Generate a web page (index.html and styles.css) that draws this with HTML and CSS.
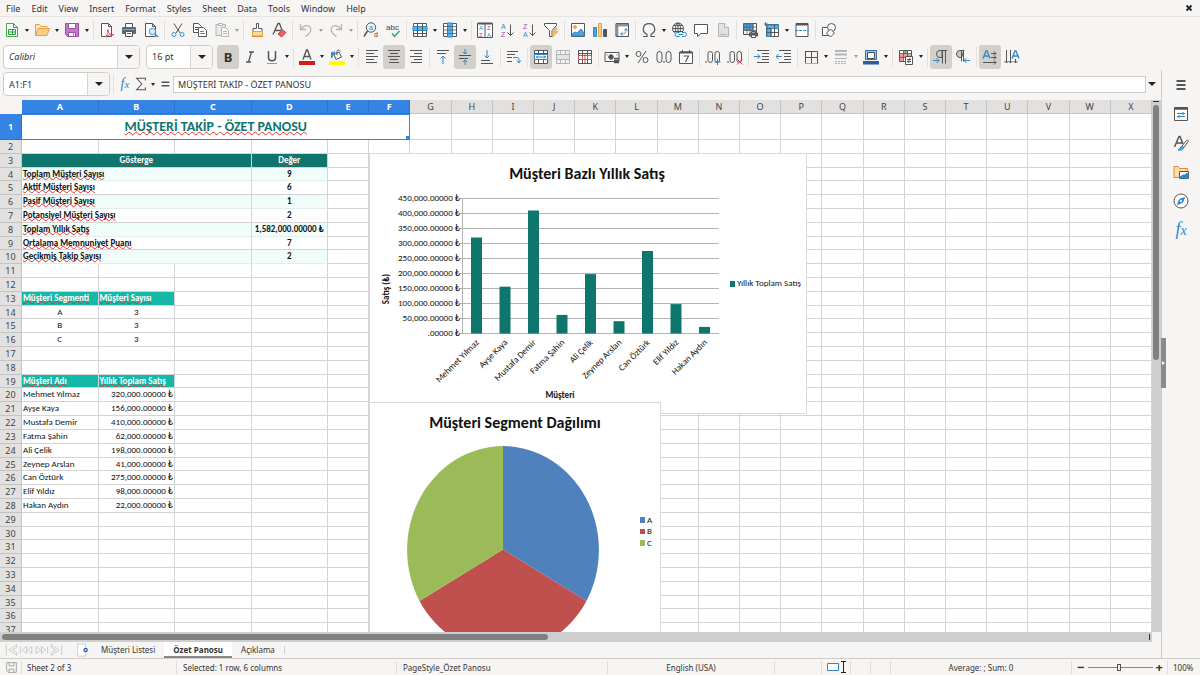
FILE: index.html
```html
<!DOCTYPE html>
<html lang="tr">
<head>
<meta charset="utf-8">
<title>Özet Panosu</title>
<link rel="stylesheet" href="styles.css">
</head>
<body>
<div class="app">
  <header class="menubar">
    <nav class="menus">
      <button>File</button><button>Edit</button><button>View</button><button>Insert</button><button>Format</button><button>Styles</button><button>Sheet</button><button>Data</button><button>Tools</button><button>Window</button><button>Help</button>
    </nav>
    <button class="close" aria-label="Close"><svg viewBox="0 0 8 8"><path d="M1.500 1.500l5 5M6.500 1.500l-5 5" stroke="#222" stroke-width="1.800"/></svg></button>
  </header>

  <div class="toolbar standard">
    <button class="tool" aria-label="New"><svg viewBox="0 0 16 16"><path d="M2.500 1.500h7l4 4v9h-11z" fill="#fff" stroke="#3fae49"/><path d="M9.500 1.500v4h4M4.500 7.500h7v5h-7zM4.500 10h7M8.500 7.500v5" stroke="#2f9e44"/></svg></button><button class="drop" aria-label="New options"></button>
    <button class="tool" aria-label="Open"><svg viewBox="0 0 16 16"><path d="M1.500 13.500v-11h4l1.500 2h6v2" fill="#fdebc8" stroke="#e8a33d"/><path d="M1.500 13.500l2.500-7h11.500l-2.500 7z" fill="#f8cf87" stroke="#e8a33d"/></svg></button><button class="drop" aria-label="Open options"></button>
    <button class="tool" aria-label="Save"><svg viewBox="0 0 16 16"><path d="M1.500 1.500h13v13h-11l-2-2z" fill="#c774cf" stroke="#9b4fa5"/><path d="M4.500 1.500h7v5h-7zM4.500 10.500h7v4h-7z" fill="#fff" stroke="#9b4fa5"/><path d="M9.500 11.500v2" stroke="#9b4fa5"/></svg></button><button class="drop" aria-label="Save options"></button>
    <i class="sep"></i>
    <button class="tool" aria-label="Export as PDF"><svg viewBox="0 0 16 16"><path d="M2.500 1.500h7l3 3v10h-10z" fill="#fff"/><path d="M9.500 1.500v3h3"/><path d="M6 15c2-2 3.500-5 3.500-6.500s-1.500-1-1 0.500c.8 2 3 4 6.500 4-3-1-6 0-9 2z" stroke="#e0475b"/></svg></button>
    <button class="tool" aria-label="Print"><svg viewBox="0 0 16 16"><path d="M4.500 5v-3.500h7V5" fill="#fff"/><rect x="1" y="5" width="14" height="7" rx="1" fill="#5c6a75" stroke="none"/><path d="M2 7.500h12" stroke="#58b0e6"/><path d="M4.500 9.500h7v5h-7z" fill="#fff"/><path d="M6 11.500h4"/></svg></button>
    <button class="tool" aria-label="Print Preview"><svg viewBox="0 0 16 16"><path d="M2.500 1.500h7l3 3v10h-10z" fill="#fff"/><path d="M9.500 1.500v3h3"/><circle cx="9.500" cy="9.500" r="3.200" fill="#d6ecfa" stroke="#3a93d3"/><path d="M12 12l3 3" stroke="#3a93d3" stroke-width="1.500"/></svg></button>
    <i class="sep"></i>
    <button class="tool" aria-label="Cut"><svg viewBox="0 0 16 16"><path d="M4 1.500l6 9.500M12 1.500L6 11"/><circle cx="4" cy="12.500" r="2" stroke="#3a93d3"/><circle cx="12" cy="12.500" r="2" stroke="#3a93d3"/></svg></button>
    <button class="tool" aria-label="Copy"><svg viewBox="0 0 16 16"><path d="M1.500 1.500h5l3 3v6h-8z" fill="#fff"/><path d="M6.500 5.500h5l3 3v6h-8z" fill="#fff"/><path d="M3 5.500h3M3 7.500h3"/><path d="M8 9.500h4M8 11.500h5" stroke="#3a93d3"/></svg></button>
    <button class="tool faded" aria-label="Paste" disabled><svg viewBox="0 0 16 16"><path d="M2 2.500h9.500v11H2z" fill="#d8d8d8"/><path d="M4.500 1.500h4v2h-4z" fill="#fff"/><path d="M7.500 5.500h4l3 3v6h-7z" fill="#fff"/><path d="M9 9.500h4M9 11.500h4"/></svg></button><button class="drop faded" aria-label="Paste options" disabled></button>
    <i class="sep"></i>
    <button class="tool" aria-label="Clone Formatting"><svg viewBox="0 0 16 16"><path d="M7.500 1.500h2v5h3.500v3H4v-3h3.500z" fill="#fff"/><path d="M3.500 9.500h10v4.500h-10z" fill="#f9d9a4" stroke="#e8a33d"/><path d="M3 14.500h11" stroke="#e0862d"/></svg></button>
    <button class="tool" aria-label="Clear Formatting"><svg viewBox="0 0 16 16"><path d="M2 12.500L7 1.500h1.500l3 8M4 8.500h6" stroke-width="1.300"/><path d="M7 12l4.500-4 3.500 2.500-4.500 4.500z" fill="#ef5b67" stroke="#d23c4a"/></svg></button>
    <i class="sep"></i>
    <button class="tool faded" aria-label="Undo" disabled><svg viewBox="0 0 16 16"><path d="M2.500 2v5.500H8M3 7c3-4 8-4.500 9.500-1s-1 6-5 8.500" stroke-width="1.300"/></svg></button><button class="drop faded" aria-label="Undo options" disabled></button>
    <button class="tool faded" aria-label="Redo" disabled><svg viewBox="0 0 16 16"><path d="M13.500 2v5.500H8M13 7C10 3 5 2.500 3.500 6s1 6 5 8.500" stroke-width="1.300"/></svg></button><button class="drop faded" aria-label="Redo options" disabled></button>
    <i class="sep"></i>
    <button class="tool" aria-label="Find and Replace"><svg viewBox="0 0 16 16"><circle cx="8" cy="5.500" r="4.700" fill="#e8f4fc"/><path d="M4.500 9L1 14.500" stroke-width="1.500"/><text x="6" y="8" font-size="7" class="blue">a</text><text x="11" y="15" font-size="7">d</text></svg></button>
    <button class="tool" aria-label="Spelling"><svg viewBox="0 0 16 16"><text x="1" y="8" font-size="8">abc</text><path d="M7 11.500l2.500 3 5-5.500" stroke="#35a56b" stroke-width="1.400"/></svg></button>
    <i class="sep"></i>
    <button class="tool" aria-label="Row"><svg viewBox="0 0 16 16"><path d="M1.500 1.500h13v13h-13z" fill="#fff"/><path d="M1 4.500h14v4H1z" fill="#5ab2ea" stroke="#2f87c8"/><path d="M1.500 11.500h13M5.500 1.500v13M10.500 1.500v13"/></svg></button><button class="drop" aria-label="Row options"></button>
    <button class="tool" aria-label="Column"><svg viewBox="0 0 16 16"><path d="M1.500 1.500h13v13h-13z" fill="#fff"/><path d="M5.500 1h5v14h-5z" fill="#5ab2ea" stroke="#2f87c8"/><path d="M1.500 4.500h13M1.500 8h13M1.500 11.500h13" stroke-width=".8"/></svg></button><button class="drop" aria-label="Column options"></button>
    <i class="sep"></i>
    <button class="tool" aria-label="Sort"><svg viewBox="0 0 16 16"><path d="M.5 1.500h15v14H.5zM8 2v13" fill="#fff"/><path d="M.5 1.500h15" stroke-width="2"/><text x="2" y="8" font-size="6" class="blue">A</text><text x="2" y="15" font-size="6" class="violet">Z</text><text x="10" y="8" font-size="6" class="violet">Z</text><text x="10" y="15" font-size="6" class="blue">A</text></svg></button>
    <button class="tool" aria-label="Sort Ascending"><svg viewBox="0 0 16 16"><text x="2" y="7" font-size="7" class="blue">A</text><text x="2" y="15" font-size="7" class="violet">Z</text><path d="M11.500 2.500v11M8.500 10.500l3 3 3-3"/></svg></button>
    <button class="tool" aria-label="Sort Descending"><svg viewBox="0 0 16 16"><text x="2" y="7" font-size="7" class="violet">Z</text><text x="2" y="15" font-size="7" class="blue">A</text><path d="M11.500 2.500v11M8.500 10.500l3 3 3-3"/></svg></button>
    <button class="tool" aria-label="AutoFilter"><svg viewBox="0 0 16 16"><path d="M1.500 1.500h12v2L9 8.500v6H6.500v-6l-5-5z" fill="#fff"/><path d="M12.500 6L9 11h2.500l-2 4.500L15 9.500h-2.500L14 6z" fill="#f8b85a" stroke="#e8a33d" stroke-width=".5"/></svg></button>
    <i class="sep"></i>
    <button class="tool" aria-label="Insert Image"><svg viewBox="0 0 16 16"><path d="M1.500 1.500h13v13h-13z" fill="#fff"/><path d="M2 12l3-2 2 1 4-4 3 4v3H2z" fill="#4ea6e0" stroke="#2f87c8"/><circle cx="5" cy="5" r="1.500" fill="#f8b85a" stroke="#e8a33d"/></svg></button>
    <button class="tool" aria-label="Insert Chart"><svg viewBox="0 0 16 16"><path d="M1.500 5.500h3v9h-3z" fill="#4ea6e0" stroke="#2f87c8"/><path d="M6.500 1.500h3v13h-3z" fill="#fbd08a" stroke="#e8a33d"/><path d="M11.500 7.500h3v7h-3z" fill="#555"/></svg></button>
    <button class="tool" aria-label="Pivot Table"><svg viewBox="0 0 16 16"><path d="M2 1.500h12.500v13H2z" fill="#fff"/><path d="M2 2h12v2H2zM2 4h2v10H2z" fill="#9b9b9b" stroke="#777" stroke-width=".6"/><path d="M7 12c4 0 5-1 5-5M10.500 8.500L12 6.500l1.500 2M8.500 10.500l-2 1.500 2 1.500" stroke="#2f87c8"/></svg></button>
    <i class="sep"></i>
    <button class="tool" aria-label="Special Character"><svg viewBox="0 0 16 16"><path d="M2 14.500h4v-2C3 11 2 9 2.300 6.500 2.800 3.500 5 1.700 8 1.700s5.200 1.800 5.700 4.800C14 9 13 11 10 12.500v2h4" stroke-width="1.200"/></svg></button><button class="drop" aria-label="Special Character options"></button>
    <button class="tool" aria-label="Hyperlink"><svg viewBox="0 0 16 16"><circle cx="7" cy="6.500" r="5.500"/><path d="M1.500 6.500h11M7 1v11M2.500 3.500h9M2.500 9.500h9"/><ellipse cx="7" cy="6.500" rx="2.500" ry="5.500"/><path d="M4 10h12v5H4z" fill="#f6f5f4" stroke="none"/><path d="M8.500 14.500H6a2 2 0 010-4h2.500M11 10.500h2.500a2 2 0 010 4H11M7.500 12.500h4.500" stroke="#2f87c8"/></svg></button>
    <button class="tool" aria-label="Comment"><svg viewBox="0 0 16 16"><path d="M1.500 2.500h13v9H8L4.500 14.500v-3h-3z" fill="#fff"/></svg></button>
    <button class="tool faded" aria-label="Headers and Footers" disabled><svg viewBox="0 0 16 16"><path d="M3.500 1.500h6l4 4v9h-10z" fill="#c5c5c5"/><path d="M9.500 1.500v4h4" fill="#fff"/><path d="M5 12.500h7"/></svg></button>
    <i class="sep"></i>
    <button class="tool" aria-label="Print Area"><svg viewBox="0 0 16 16"><path d="M1.500 1.500h13v11h-13z" fill="#fff"/><path d="M2 2h9v6H2z" fill="#4ea6e0" stroke="#2f87c8"/><path d="M1.500 5h13M1.500 8.500h13M5 2v10M8 2v10M11 2v10" stroke-width=".7"/><path d="M7.500 11h8v3h-8z" fill="#5c6a75"/><path d="M9.500 13h4v2.500h-4zM9.500 9.500h4V11h-4z" fill="#fff"/></svg></button>
    <button class="tool" aria-label="Freeze"><svg viewBox="0 0 16 16"><path d="M2.500 2.500h12v12h-12z" fill="#fff"/><path d="M3 3h11.500v3.500H7v8H3z" fill="#5ab2ea" stroke="#2f87c8"/><path d="M3 10.500h11.500M10.500 3v11.500M3 6.500h4M7 7v8"/><path d="M1.500 0v4M0 2h4" stroke="#2f87c8"/></svg></button><button class="drop" aria-label="Freeze options"></button>
    <button class="tool" aria-label="Split Window"><svg viewBox="0 0 16 16"><path d="M2 1.500h12v13H2z" fill="#fff"/><path d="M2 2.500h12" stroke-width="2"/><path d="M1 8.500h14" stroke="#2f87c8" stroke-dasharray="3 1"/></svg></button>
    <i class="sep"></i>
    <button class="tool" aria-label="Draw Functions"><svg viewBox="0 0 16 16"><path d="M1.500 5.500h8v8h-8z" fill="#fff"/><circle cx="10.500" cy="5.500" r="4" fill="#fff"/><path d="M9.500 7l4 4-4 4-4-4z" fill="#fff"/></svg></button>
  </div>

  <div class="toolbar formatting">
    <div class="combo font-name"><input aria-label="Font Name" value="Calibri"><button class="open" aria-label="Font list"></button></div>
    <div class="combo font-size"><input aria-label="Font Size" value="16 pt"><button class="open" aria-label="Size list"></button></div>
    <button class="tool on" aria-label="Bold"><span class="bold">B</span></button>
    <button class="tool" aria-label="Italic"><svg viewBox="0 0 16 16"><path d="M7 3h5M4 13h5M9.500 3l-3 10" stroke-width="1.300"/></svg></button>
    <button class="tool" aria-label="Underline"><svg viewBox="0 0 16 16"><path d="M4.500 2v6.500c0 4.300 7 4.300 7 0V2" stroke-width="1.500"/><path d="M3 14.500h10" stroke="#5aa9e0"/></svg></button><button class="drop" aria-label="Underline options"></button>
    <i class="sep"></i>
    <button class="tool" aria-label="Font Color"><svg viewBox="0 0 16 16"><path d="M4 10.500L7.500 1h1L12 10.500M5.500 7.500h5" stroke-width="1.400"/><path d="M0 12h16v4H0z" fill="#c9211e" stroke="none"/></svg></button><button class="drop" aria-label="Font Color options"></button>
    <button class="tool" aria-label="Highlighting"><svg viewBox="0 0 16 16"><path d="M5 5.500l5-2.500 2.500 5L7 10.500zM8 6V2.500c0-2 3-2 3 0" fill="#fff"/><path d="M2.500 9V3.500L6 3 3.500 7z" fill="#3a93d3" stroke="#2f87c8"/><path d="M0 12h16v4H0z" fill="#ff0" stroke="none"/></svg></button><button class="drop" aria-label="Highlighting options"></button>
    <i class="sep"></i>
    <button class="tool" aria-label="Align Left"><svg viewBox="0 0 16 16"><path d="M2 1.500h12M2 4.500h8M2 7.500h12M2 10.500h8M2 13.500h11"/></svg></button>
    <button class="tool on" aria-label="Center"><svg viewBox="0 0 16 16"><path d="M2 1.500h12M4 4.500h8M2 7.500h12M4 10.500h8M3 13.500h10"/></svg></button>
    <button class="tool" aria-label="Align Right"><svg viewBox="0 0 16 16"><path d="M2 1.500h12M6 4.500h8M2 7.500h12M6 10.500h8M3 13.500h11"/></svg></button>
    <i class="sep"></i>
    <button class="tool" aria-label="Align Top"><svg viewBox="0 0 16 16"><path d="M2 1.500h12M2 4.500h9"/><path d="M8 15V7M5.500 9.500L8 7l2.500 2.500" stroke="#2f87c8"/></svg></button>
    <button class="tool on" aria-label="Center Vertically"><svg viewBox="0 0 16 16"><path d="M2 6.500h12M2 9.500h9"/><path d="M8 0v5M6 3l2 2 2-2M8 16v-5M6 13l2-2 2 2" stroke="#2f87c8"/></svg></button>
    <button class="tool" aria-label="Align Bottom"><svg viewBox="0 0 16 16"><path d="M2 14.500h12M2 11.500h9"/><path d="M8 1v8M5.500 6.500L8 9l2.500-2.500" stroke="#2f87c8"/></svg></button>
    <i class="sep"></i>
    <button class="tool" aria-label="Wrap Text"><svg viewBox="0 0 16 16"><path d="M1 2.500h11M1 5.500h8M1 8.500h5M1 12.500h5"/><path d="M7 8.500h4c2 0 2 1 2 5M11 11.500l2 2.500 2-2.500" stroke="#2f87c8"/></svg></button>
    <i class="sep"></i>
    <button class="tool on" aria-label="Merge and Center"><svg viewBox="0 0 16 16"><path d="M1.500 1.500h13v13h-13zM1.500 4.500h13M5.500 1.500v13M10.500 1.500v13" fill="#fff"/><path d="M1.500 5.500h13v5h-13z" fill="#fff" stroke="#2f87c8"/><path d="M3 8h10M5 6.500L3.500 8 5 9.500M11 6.500L12.500 8 11 9.500" stroke="#2f87c8"/></svg></button>
    <button class="tool faded" aria-label="Merge Cells" disabled><svg viewBox="0 0 16 16"><path d="M1.500 1.500h13v13h-13zM1.500 5.500h13M5.500 1.500v13M10.500 1.500v13" fill="#eee"/><path d="M1.500 5.500h13v5h-13z" fill="#ccc"/></svg></button>
    <button class="tool" aria-label="Unmerge Cells"><svg viewBox="0 0 16 16"><path d="M1.500 1.500h13v13h-13zM1.500 4.500h13M5.500 1.500v13M10.500 1.500v13" fill="#fff"/><path d="M1.500 6.500h13v4h-13zM5.500 6.500v4M10.500 6.500v4M8 4v10" fill="#fff" stroke="#dc4b4b"/></svg></button>
    <i class="sep"></i>
    <button class="tool" aria-label="Currency"><svg viewBox="0 0 16 16"><path d="M1 3.500h14v9H1z" fill="#fff"/><circle cx="7" cy="8" r="2.300" fill="#555"/><path d="M10 9.500h5M10 11.500h5M10 13.500h5" stroke-width="1.500"/><path d="M3 5.500v1M13 5.500v1"/></svg></button><button class="drop" aria-label="Currency options"></button>
    <button class="tool" aria-label="Percent"><svg viewBox="0 0 16 16"><circle cx="4.500" cy="5" r="2.500"/><circle cx="11.500" cy="11" r="2.500"/><path d="M12 2L4 14"/></svg></button>
    <button class="tool" aria-label="Number"><svg viewBox="0 0 16 16"><rect x="1" y="2.500" width="5" height="11" rx="2.500"/><rect x="10" y="2.500" width="5" height="11" rx="2.500"/><path d="M8 12v2"/></svg></button>
    <button class="tool" aria-label="Date"><svg viewBox="0 0 16 16"><path d="M1.500 3h13v11.500h-13zM4.500 1v3M11.500 1v3" fill="#fff"/><path d="M2 3.500h12" stroke-width="2"/><path d="M5.500 7h5L7.500 13" stroke-width="1.200"/></svg></button>
    <i class="sep"></i>
    <button class="tool" aria-label="Add Decimal"><svg viewBox="0 0 16 16"><path d="M1 12v2"/><rect x="3" y="2.500" width="4.500" height="11" rx="2.200"/><rect x="10" y="2.500" width="4.500" height="11" rx="2.200"/><path d="M12.500 10v6M9.500 13h6" stroke="#2f87c8"/></svg></button>
    <button class="tool" aria-label="Delete Decimal"><svg viewBox="0 0 16 16"><path d="M1 12v2"/><rect x="3" y="2.500" width="4.500" height="11" rx="2.200"/><rect x="10" y="2.500" width="4.500" height="11" rx="2.200"/><path d="M10 10l5.500 5.500M15.500 10L10 15.500" stroke="#e0475b"/></svg></button>
    <i class="sep"></i>
    <button class="tool" aria-label="Increase Indent"><svg viewBox="0 0 16 16"><path d="M3 1.500h12M8 4.500h7M8 7.500h7M8 10.500h7M3 13.500h12"/><path d="M0 7.500h6M3.500 5L6 7.500 3.500 10" stroke="#2f87c8"/></svg></button>
    <button class="tool" aria-label="Decrease Indent"><svg viewBox="0 0 16 16"><path d="M3 1.500h12M8 4.500h7M8 7.500h7M8 10.500h7M3 13.500h12"/><path d="M0 7.500h6M2.500 5L0 7.500 2.500 10" stroke="#2f87c8"/></svg></button>
    <i class="sep"></i>
    <button class="tool" aria-label="Borders"><svg viewBox="0 0 16 16"><path d="M2 2.500h12.500v12M2.500 2v12.500M8.500 2v12M2 8.500h12"/><path d="M2 14.500h12" stroke="#e8a33d"/></svg></button><button class="drop" aria-label="Borders options"></button>
    <button class="tool faded" aria-label="Border Style" disabled><svg viewBox="0 0 16 16"><path d="M2 2h12M2 5.500h12" stroke-width="2"/><path d="M2 9.500h12"/><path d="M2 12.500h12M2 14.500h12" stroke-dasharray="2 1"/></svg></button><button class="drop faded" aria-label="Border Style options" disabled></button>
    <button class="tool" aria-label="Border Color"><svg viewBox="0 0 16 16"><path d="M2.500 1.500h11v9h-11z" fill="#9cc9ec" stroke="#2f6fab"/><path d="M4.500 3.500h7v6h-7z" fill="#fff" stroke="#4a4a4a"/><path d="M0 12h16v3.500H0z" fill="#2a6099" stroke="none"/></svg></button><button class="drop" aria-label="Border Color options"></button>
    <i class="sep"></i>
    <button class="tool" aria-label="Conditional"><svg viewBox="0 0 16 16"><path d="M1.500 1.500h12v11h-12z" fill="#fff"/><path d="M6 2h4v4H6z" fill="#5cc27c" stroke="none"/><path d="M2 5h11v3H2zM2 8h3v4H2z" fill="#f39a9a" stroke="none"/><path d="M1.500 4.500h12M1.500 8.500h12M5.500 1.500v11M9.500 1.500v11" stroke-width=".8"/><path d="M7.500 7.500h7v8h-7z" fill="#fff"/><path d="M9 10.500h4M9 12.500h4M12 9l-2 5"/></svg></button><button class="drop" aria-label="Conditional options"></button>
    <i class="sep"></i>
    <button class="tool on" aria-label="Left-To-Right"><svg viewBox="0 0 16 16"><path d="M14 1.500H7a3 3 0 000 7h2V1.500M9.500 1.500v13M12.500 1.500v13"/><path d="M0 11.500h6M3.500 9L6 11.500 3.500 14" stroke="#2f87c8"/></svg></button>
    <button class="tool" aria-label="Right-To-Left"><svg viewBox="0 0 16 16"><path d="M9 1.500H5a3 3 0 000 7h1.500zM6.500 1.500v11M8.500 1.500v11" fill="#ccc"/><path d="M9 11.500h6M11.500 9L9 11.500l2.500 2.500" stroke="#2f87c8"/></svg></button>
    <i class="sep"></i>
    <button class="tool on" aria-label="Horizontal text"><svg viewBox="0 0 16 16"><path d="M1 9.500L4 2h1l3 7.500M2 7h5" stroke="#2f87c8" stroke-width="1.300"/><path d="M9 4.500h5M9 8.500h5M12 2.500l2 2-2 2M12 6.500l2 2-2 2M1 13.500h13M12 11.500l2 2-2 2"/></svg></button>
    <button class="tool" aria-label="Vertical text"><svg viewBox="0 0 16 16"><path d="M8 9.500L11 2h1l3 7.500M9 7h5" stroke="#2f87c8" stroke-width="1.300"/><path d="M2.500 1v13M.5 12l2 2 2-2M6.500 1v13M4.500 12l2 2 2-2M11.500 10v4M9.500 12l2 2 2-2"/></svg></button>
  </div>

  <div class="body">
    <main class="work">
      <div class="formula-bar">
        <div class="combo name-box"><input aria-label="Name Box" value="A1:F1"><button class="open" aria-label="Names"></button></div>
        <i class="sep"></i>
        <button class="mini" aria-label="Function Wizard"><span class="fx">f<small>x</small></span></button>
        <button class="mini" aria-label="Select Function"><svg viewBox="0 0 16 16"><path d="M13 4V1.500H3L9 8l-6 6.500h10V12" stroke-width="1.200"/></svg></button>
        <button class="drop" aria-label="Function list"></button>
        <button class="mini" aria-label="Formula"><svg viewBox="0 0 16 16"><path d="M4 6h9M4 10h9" stroke-width="1.800"/></svg></button>
        <input class="formula" aria-label="Input line" value="MÜŞTERİ TAKİP - ÖZET PANOSU">
        <button class="open expand" aria-label="Expand Formula Bar"></button>
      </div>

      <div class="grid-area">
        <div class="viewport">
          <table class="sheet">
            <thead id="cols"></thead>
            <tbody id="rows"></tbody>
          </table>
          <svg class="chart bars" viewBox="1 1 436 259" id="bars" role="img" aria-label="Müşteri Bazlı Yıllık Satış"></svg>
          <svg class="chart pie" viewBox="1 1 290 268" role="img" aria-label="Müşteri Segment Dağılımı">
            <text class="title" x="146" y="26" text-anchor="middle">Müşteri Segment Dağılımı</text>
            <path fill="#4f81bd" d="M134 147.500V44A96.500 104 0 0 1 217.500 199z"/>
            <path fill="#c0504d" d="M134 147.500L217.500 199A96.500 104 0 0 1 50.500 199z"/>
            <path fill="#9bbb59" d="M134 147.500L50.500 199A96.500 104 0 0 1 134 44z"/>
            <rect x="271" y="115" width="5" height="6" fill="#4f81bd"/><text x="278" y="121">A</text>
            <rect x="271" y="127" width="5" height="5" fill="#c0504d"/><text x="278" y="132">B</text>
            <rect x="271" y="138" width="5" height="6" fill="#9bbb59"/><text x="278" y="144">C</text>
          </svg>
        </div>
        <div class="vscroll"><i class="thumb"></i></div>
      </div>
      <div class="hscroll"><i class="thumb"></i></div>

      <div class="tabs">
        <div class="tab-nav">
          <button aria-label="First sheet"><svg viewBox="0 0 16 16"><path d="M2 2v12M14 2L5 8l9 6v-3L9 8l5-3z"/></svg></button>
          <button aria-label="Previous sheet"><svg viewBox="0 0 16 16"><path d="M1 4v8M8 4L3 8l5 4zM14 4L9 8l5 4z"/></svg></button>
          <button aria-label="Next sheet"><svg viewBox="0 0 16 16"><path d="M15 4v8M8 4l5 4-5 4zM2 4l5 4-5 4z"/></svg></button>
          <button aria-label="Last sheet"><svg viewBox="0 0 16 16"><path d="M14 2v12M2 2l9 6-9 6v-3l5-3-5-3z"/></svg></button>
        </div>
        <button class="add" aria-label="Add sheet"><svg viewBox="0 0 12 16"><path d="M0 1h9v14H0z" fill="#fff" stroke="#ccc"/><circle cx="9" cy="8" r="1.800" stroke="#2a63b0" stroke-width="1.500"/></svg></button>
        <button class="tab">Müşteri Listesi</button>
        <button class="tab active">Özet Panosu</button>
        <button class="tab">Açıklama</button>
        <i class="sep"></i>
      </div>
    </main>

    <aside class="sidebar">
      <button class="grip" aria-label="Hide sidebar"></button>
      <button aria-label="Sidebar Settings"><svg viewBox="0 0 16 16"><path d="M3.500 4h9M3.500 8h9M3.500 12h9" stroke="#222" stroke-width="1.400"/></svg></button>
      <button aria-label="Properties"><svg viewBox="0 0 16 16"><path d="M1.500 1.500h13v13h-13z" fill="#fff"/><path d="M1.500 2.500h13" stroke-width="2.500"/><path d="M4 7.500h8M10 6v3M4 10.500h8M6 9v3" stroke="#2f87c8"/></svg></button>
      <button aria-label="Styles"><svg viewBox="0 0 16 16"><path d="M1.500 12L6 1.500h1L10 9M3 8h6" stroke-width="1.500"/><path d="M9 11l4.500-5.500c1-1 2 0 1.500 1L11 12.500" fill="#fff"/><path d="M5 15c2 0 2-3 4-4l2 1.500C10 15 7 15.500 5 15z" fill="#5aa9e0" stroke="#2f87c8"/></svg></button>
      <button aria-label="Gallery"><svg viewBox="0 0 16 16"><path d="M1 13.500v-11h4l1.500 2h8v9z" fill="#fbdcae" stroke="#e8862d"/><path d="M6.500 7.500h9v7h-9z" fill="#fff"/><path d="M7 13l3-2 2 0 2-2 1 2v3H7z" fill="#2f87c8" stroke="#2f87c8"/></svg></button>
      <button aria-label="Navigator"><svg viewBox="0 0 16 16"><circle cx="8" cy="8" r="7" fill="#fff"/><path d="M11.500 4.500L9.500 9.500l-5 2 2-5z" fill="#3a93d3" stroke="#2f87c8"/><circle cx="8" cy="8" r="1" fill="#fff" stroke="none"/></svg></button>
      <button aria-label="Functions"><span class="fx big">f<small>x</small></span></button>
    </aside>
  </div>

  <footer class="status">
    <span class="cell s-save"><svg viewBox="0 0 16 16"><path d="M2 2h12v12H4l-2-2zM5 2v4h6V2M5 14v-4h6v4" stroke="#999"/></svg></span>
    <span class="cell s-sheet">Sheet 2 of 3</span>
    <span class="cell s-sel">Selected: 1 row, 6 columns</span>
    <span class="cell s-style">PageStyle_Özet Panosu</span>
    <span class="cell s-lang">English (USA)</span>
    <span class="cell s-ins"></span>
    <span class="cell s-mode"><svg viewBox="0 0 22 14"><path d="M.5 3.500h11v7H.5z" fill="#fff" stroke="#2f87c8"/><path d="M14 1.500h5M14 12.500h5M16.500 1.500v11" stroke="#222"/></svg></span>
    <span class="cell s-gap"></span>
    <span class="cell s-gap"></span>
    <span class="cell s-sum">Average: ; Sum: 0</span>
    <span class="cell s-zoom"><button aria-label="Zoom out">−</button><input type="range" min="0" max="100" value="48" aria-label="Zoom"><button aria-label="Zoom in">+</button></span>
    <span class="cell s-pct">100%</span>
  </footer>
</div>
<script src="app.js"></script>
</body>
</html>
```
FILE: styles.css
```css
* { box-sizing: border-box; }
body { margin: 0; background: #f6f5f4; color: #333; font-family: "Noto Sans", sans-serif; font-size: 9px; }
button, input { margin: 0; padding: 0; border: 0; background: none; color: inherit; font: inherit; }
svg { display: block; fill: none; stroke: #555; }
.app { display: flex; flex-direction: column; height: 100vh; overflow: hidden; }

.menubar { display: flex; align-items: center; justify-content: space-between; height: 17px; padding: 0 7px 0 6px; border-bottom: 1px solid #e6e4e2; }
.menus { display: flex; gap: 11px; }
.close { width: 8px; }

.toolbar { display: flex; align-items: center; height: 27px; padding-left: 2px; }
.toolbar.standard { height: 26px; padding-left: 1px; }
.tool { display: flex; align-items: center; justify-content: center; flex: none; width: 22px; height: 24px; border-radius: 3px; }
.tool svg { width: 16px; height: 16px; }
.tool text { stroke: none; fill: #444; font-family: "Liberation Sans", sans-serif; }
.tool .blue { fill: #2f87c8; }
.tool .violet { fill: #a347ba; }
.tool.on { background: #d3cfcb; }
.bold { font-size: 13px; line-height: 16px; font-weight: 700; }
.faded { opacity: .4; }
.drop { flex: none; width: 8px; height: 20px; display: flex; align-items: center; justify-content: center; }
.drop::before { content: ""; border: 2px solid transparent; border-top: 3px solid #222; border-bottom: 0; }
.sep { flex: none; width: 1px; height: 20px; margin: 0 2px; background: #e3e0dd; }

.combo { display: flex; flex: none; height: 24px; border: 1px solid #d0ccc8; border-radius: 4px; background: #fff; overflow: hidden; }
.combo input { flex: 1; min-width: 0; padding-left: 5px; }
.open { display: flex; flex: none; align-items: center; justify-content: center; width: 22px; }
.combo .open { border-left: 1px solid #d8d4d0; background: #f6f5f4; }
.open::before { content: ""; border: 4px solid transparent; border-top: 4px solid #222; border-bottom: 0; }
.font-name { width: 137px; margin: 0 6px 0 1px; font-style: italic; }
.font-size { width: 67px; margin-right: 4px; }

.body { display: flex; flex: 1; min-height: 0; }
.work { display: flex; flex: 1; flex-direction: column; min-width: 0; }
.formula-bar { display: flex; align-items: center; flex: none; height: 30px; padding: 0 0 2px 3px; }
.name-box { width: 107px; }
.formula-bar .sep { margin: 0 3px; }
.mini { display: flex; flex: none; align-items: center; justify-content: center; width: 16px; height: 20px; }
.mini svg { width: 14px; height: 14px; }
.fx { color: #2f87c8; font: italic 14px "Liberation Serif", serif; }
.fx small { font-size: 11px; }
.fx.big { font-size: 18px; line-height: 18px; }
.fx.big small { font-size: 14px; }
.formula { flex: 1; min-width: 0; height: 17px; padding-left: 4px; border: 1px solid #d0ccc8; background: #fff; }
.expand { justify-content: flex-start; width: 15px; height: 20px; padding-left: 2px; }

.grid-area { display: flex; flex: 1; min-height: 0; }
.viewport { position: relative; flex: 1; min-width: 0; overflow: hidden; background: #fff; }
.sheet { display: block; font-family: Carlito, Lato, sans-serif; font-size: 9px; color: #111; }
.sheet thead, .sheet tbody { display: grid; }
.sheet thead { grid-template-rows: 14px; }
.sheet tbody { grid-template-rows: 26px repeat(36, 1fr); height: 523px; }
.sheet tr { display: grid; grid-template-columns: 22px repeat(4, 13fr) repeat(20, 7fr); grid-template-rows: minmax(0, 1fr); min-height: 0; }
.sheet th { border-right: 1px solid #c4c4c4; border-bottom: 1px solid #c4c4c4; background: #e2e1e0; color: #444; font: 9px/13px "Noto Sans", sans-serif; padding: 0; text-align: center; }
.sheet th.sel { border-color: #2d74ca; background: #3584e4; color: #fff; font-weight: 700; }
.sheet thead th:first-child { border: 0; background: #f6f5f4; }
.sheet tbody th.sel { line-height: 26px; }
.sheet td { border-right: 1px solid #d4d4d4; border-bottom: 1px solid #d4d4d4; padding: 0 1px; line-height: 12px; white-space: nowrap; overflow: hidden; min-width: 0; }
.sheet .w3 { grid-column: span 3; }
.sheet .w6 { grid-column: span 6; }
.sheet .c { text-align: center; }
.sheet .r { text-align: right; }
.sheet .b { font-weight: 700; }
.sheet .title { position: relative; border: 1px solid #3584e4; border-left: 0; color: #0f766e; font-size: 14px; line-height: 24px; font-weight: 700; }
.sheet .title::after { content: ""; position: absolute; right: 0; bottom: 0; width: 3px; height: 3px; background: #3584e4; }
.sheet .dark { background: #0f766e; color: #fff; font-weight: 700; }
.sheet .teal { background: #14b8a6; color: #fff; font-weight: 700; }
.sheet .mint { border-bottom-color: #e2efec; background: #f0fdfa; }
.spell { text-decoration: underline wavy #e03030 1px; text-underline-offset: -1px; text-decoration-skip-ink: none; }
.title .spell { text-underline-offset: 0; }

.chart { position: absolute; left: 369px; border: 1px solid #d9d9d9; background: #fff; font-family: Carlito, Lato, sans-serif; font-size: 9px; stroke: none; }
.chart text { fill: #111; }
.chart .title { font-size: 16px; font-weight: 700; }
.chart .axis { font-weight: 700; }
.bars { top: 53px; width: 438px; height: 261px; }
.pie { top: 302px; width: 292px; height: 270px; }

.vscroll { flex: none; width: 9px; background: #cecece; padding: 1px 2px 0 1px; }
.vscroll::before { content: ""; display: block; height: 1px; margin-bottom: 3px; background: #333; }
.vscroll .thumb { display: block; height: 48%; border-radius: 3px; background: #808080; }
.hscroll { display: flex; flex: none; justify-content: space-between; height: 10px; margin-right: 9px; padding: 2px; background: #cecece; }
.hscroll .thumb { width: 47.6%; height: 6px; border-radius: 3px; background: #808080; }
.hscroll::after { content: ""; width: 1px; background: #333; }

.tabs { display: flex; flex: none; height: 16px; padding-left: 4px; font-size: 8px; }
.tabs svg { width: 15px; height: 14px; stroke: #c8c6c4; }
.tab-nav { display: flex; margin-right: 13px; }
.add { margin-right: 3px; }
.add svg { width: 12px; }
.tab { padding: 0 9px; border-bottom: 2px solid transparent; }
.tab.active { border-color: #888; background: #fff; font-weight: 700; }
.tabs .sep { height: 8px; margin: 4px 0; background: #ccc; }

.sidebar { position: relative; display: flex; flex: none; flex-direction: column; align-items: center; gap: 13px; width: 39px; padding-top: 7px; border-left: 1px solid #d0ccc8; }
.sidebar svg { width: 16px; height: 16px; }
.sidebar button { display: flex; align-items: center; justify-content: center; width: 20px; height: 16px; }
.sidebar .grip { position: absolute; left: -1px; top: 268px; width: 5px; height: 50px; background: #8b8b8b; }
.grip::before { content: ""; border: 2px solid transparent; border-left: 3px solid #fff; border-right: 0; }

.status { display: flex; flex: none; align-items: center; height: 17px; border-top: 1px solid #d0ccc8; font-size: 8px; }
.cell { display: flex; flex: none; align-items: center; height: 13px; padding-left: 5px; border-right: 1px solid #e0dddb; }
.s-save { width: 22px; }
.s-save svg { width: 13px; height: 13px; }
.s-sheet { width: 155px; }
.s-sel { width: 220px; padding-left: 6px; }
.s-style { width: 211px; padding-left: 6px; }
.s-lang { width: 167px; justify-content: center; padding: 0; }
.s-ins { width: 47px; }
.s-mode { width: 29px; }
.s-mode svg { width: 22px; height: 14px; }
.s-gap { width: 20px; }
.s-sum { flex: 1; justify-content: center; padding: 0; }
.s-zoom { width: 96px; gap: 3px; padding-right: 4px; }
.s-zoom button { font-size: 13px; line-height: 12px; font-weight: 700; }
.s-zoom input { flex: 1; min-width: 0; height: 10px; appearance: none; }
.s-zoom input::-webkit-slider-runnable-track { height: 1px; background: #888; }
.s-zoom input::-webkit-slider-thumb { appearance: none; width: 4px; height: 7px; margin-top: -3px; border: 1px solid #555; background: #f6f5f4; }
.s-pct { width: 32px; border: 0; }
```
FILE: app.js
```js
const COLS = "ABCDEFGHIJKLMNOPQRSTUVWX".split("");
const spell = t => `<span class="spell">${t}</span>`;
const sales = [
  ["Mehmet Yılmaz", 320000], ["Ayşe Kaya", 156000], ["Mustafa Demir", 410000],
  ["Fatma Şahin", 62000], ["Ali Çelik", 198000], ["Zeynep Arslan", 41000],
  ["Can Öztürk", 275000], ["Elif Yıldız", 98000], ["Hakan Aydın", 22000]
];
const money = n => (n ? n.toLocaleString("en-US") : "") + ".00000 ₺";

// Each row lists its leading cells as [html, classes, columns covered].
const rows = {
  1: [[spell("MÜŞTERİ TAKİP - ÖZET PANOSU"), "title c w6", 6]],
  3: [[spell("Gösterge"), "dark c w3", 3], [spell("Değer"), "dark c", 1]],
  13: [[spell("Müşteri Segmenti"), "teal", 1], [spell("Müşteri Sayısı"), "teal", 1]],
  19: [[spell("Müşteri Adı"), "teal", 1], [spell("Yıllık Toplam Satış"), "teal", 1]]
};
[["Toplam Müşteri Sayısı", "9"], ["Aktif Müşteri Sayısı", "6"], ["Pasif Müşteri Sayısı", "1"],
 ["Potansiyel Müşteri Sayısı", "2"], ["Toplam Yıllık Satış", money(1582000)],
 ["Ortalama Memnuniyet Puanı", "7"], ["Gecikmiş Takip Sayısı", "2"]].forEach(([k, v], i) => {
  const tint = i % 2 ? "" : " mint";
  rows[4 + i] = [[spell(k), "b w3" + tint, 3], [v, "b c" + tint, 1]];
});
["A", "B", "C"].forEach((s, i) => { rows[14 + i] = [[s, "c", 1], ["3", "c", 1]]; });
sales.forEach(([n, v], i) => { rows[20 + i] = [[n, "", 1], [money(v), "r", 1]]; });

document.getElementById("cols").innerHTML =
  "<tr><th></th>" + COLS.map((c, i) => `<th class="${i < 6 ? "sel" : ""}">${c}</th>`).join("") + "</tr>";

let html = "";
for (let r = 1; r <= 37; r++) {
  let used = 0;
  html += `<tr><th class="${r === 1 ? "sel" : ""}">${r}</th>`;
  for (const [text, cls, span] of rows[r] || []) {
    html += `<td class="${cls}" colspan="${span}">${text}</td>`;
    used += span;
  }
  html += "<td></td>".repeat(24 - used) + "</tr>";
}
document.getElementById("rows").innerHTML = html;

let svg = '<text class="title" x="218" y="26" text-anchor="middle">Müşteri Bazlı Yıllık Satış</text>';
for (let i = 0; i <= 9; i++) {
  const y = 180 - i * 15;
  svg += `<path d="M90 ${y + 0.5}H350" stroke="#b3b3b3"/><text x="91" y="${y + 3}" text-anchor="end">${money(i * 50000)}</text>`;
}
svg += '<path d="M93.5 45V181" stroke="#b3b3b3"/>';
sales.forEach(([name, value], i) => {
  const x = 107.5 + i * 28.5, h = value * 135 / 450000;
  svg += `<rect x="${x - 5.5}" y="${180.5 - h}" width="11" height="${h}" fill="#0f766e"/>`;
  svg += `<text text-anchor="end" transform="translate(${x + 3} 190) rotate(-45)">${name}</text>`;
});
svg += '<text class="axis" x="191" y="245" text-anchor="middle">Müşteri</text>';
svg += '<text class="axis" text-anchor="middle" transform="translate(20 136) rotate(-90)">Satış (₺)</text>';
svg += '<rect x="361" y="128" width="5" height="6" fill="#0f766e"/><text x="368" y="133">Yıllık Toplam Satış</text>';
document.getElementById("bars").innerHTML = svg;
```
